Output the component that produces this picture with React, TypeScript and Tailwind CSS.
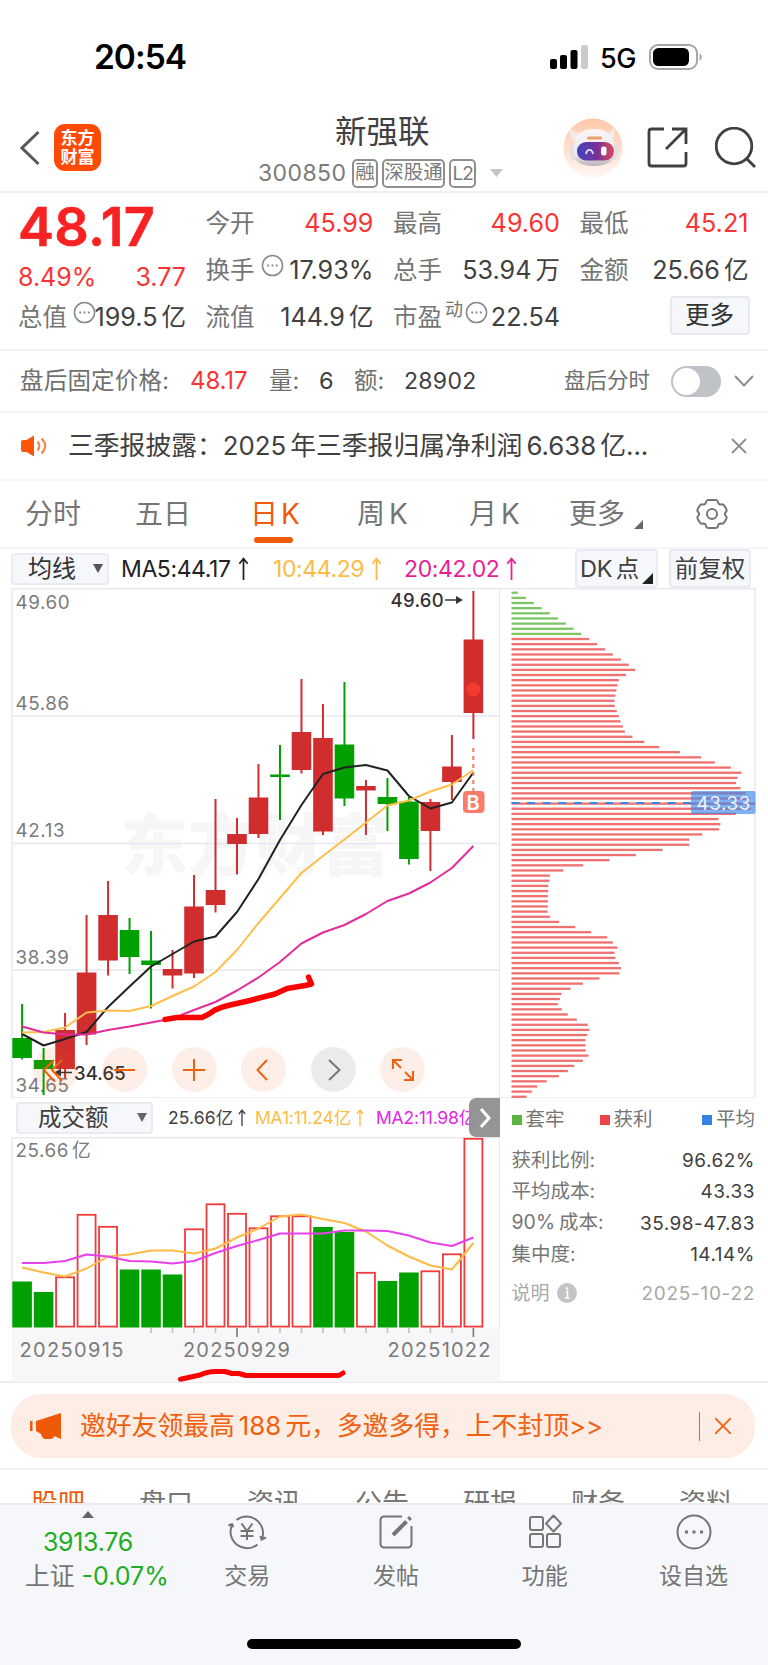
import type { ReactNode } from 'react';

const RED = '#d02d2f';
const GREEN = '#00a000';

// [high, low, bodyTop, bodyBottom, up]
const CANDLES: [number, number, number, number, boolean][] = [
    [1004, 1059.5, 1038, 1058, false],
    [1048, 1095, 1060, 1069, false],
    [1013, 1078, 1030, 1069, true],
    [915, 1045, 972.5, 1034.5, true],
    [881, 975.5, 915, 960.5, true],
    [918, 974, 930, 957, false],
    [931, 1008.5, 960.5, 965, false],
    [950, 988.5, 969, 975.5, true],
    [875, 978, 906.5, 973.5, true],
    [799, 912.5, 890, 905, true],
    [818, 874.5, 834, 844, true],
    [764, 838, 797.5, 834, true],
    [745, 820, 774.5, 777, false],
    [679, 773.5, 732, 770, true],
    [704, 835, 738, 831.5, true],
    [682, 806, 744.5, 798.5, false],
    [780, 835, 786, 790.5, true],
    [778, 831, 797, 804, false],
    [797, 864.5, 801.5, 859, false],
    [799, 871, 802, 831, true],
    [735, 800, 766.5, 782, true],
    [591, 739, 639.5, 713, true],
];

const MA5 = [1034, 1045.5, 1039, 1032, 1007, 986.5, 966.5, 954, 941.5, 936.5, 912, 879, 840, 805, 774, 767.5, 765, 770.5, 796, 808.5, 802.5, 772.5];
const MA10 = [1032.5, 1032, 1027.5, 1012.5, 1010.5, 1011, 1006, 996, 986.5, 972, 950, 923, 898, 873, 856, 839.5, 822.5, 805.5, 800.5, 791.5, 784.5, 770];
const MA20 = [1026.5, 1032.5, 1034.5, 1034.5, 1030, 1026.5, 1022.5, 1018.5, 1010, 1002, 990.5, 977.5, 962, 943.5, 932.5, 925, 914, 901, 893.5, 882.5, 868, 846];

// [top, up]
const VOLUMES: [number, boolean][] = [
    [1281.5, false], [1292, false], [1276.5, true], [1214, true], [1226, true], [1269.5, false],
    [1269.5, false], [1274.5, false], [1228.5, true], [1203.5, true], [1213, true], [1227.5, true],
    [1215.5, true], [1215.5, true], [1227, false], [1232, false], [1272, true], [1281, false],
    [1272.5, false], [1270.5, true], [1253.5, true], [1138, true],
];
const VOL_MA1 = [1267.5, 1272.5, 1276.5, 1268.5, 1256.5, 1254.5, 1250.5, 1250.5, 1253.5, 1248.5, 1237.5, 1228.5, 1216.5, 1214.5, 1219, 1223, 1231.5, 1245.5, 1256.5, 1265.5, 1269.5, 1243];
const VOL_MA2 = [1263, 1263, 1261, 1254.5, 1256.5, 1261, 1261.5, 1263.5, 1261, 1253, 1246, 1240, 1233.5, 1233.5, 1233.5, 1230.5, 1230.5, 1231, 1235.5, 1242.5, 1246, 1237.5];

const CHIPS = [
    19, 43, 67, 91, 115, 139, 163, 186, 209, 233, 257, 281, 304, 328, 352, 371, 343, 322, 318, 315, 312, 309, 310, 316, 322,
    327, 334, 340, 363, 398, 443, 505, 569, 610, 658, 690, 678, 674, 687, 703, 716, 731, 718, 673, 621, 627, 623, 572, 533, 533,
    453, 373, 294, 215, 156, 115, 114, 110, 110, 109, 109, 109, 108, 116, 143, 191, 239, 287, 304, 318, 309, 312, 322, 329, 324,
    264, 214, 177, 150, 145, 139, 151, 169, 196, 229, 234, 228, 222, 222, 223, 231, 214, 188, 169, 142, 105, 77, 61, 45,
];

const cx = (i: number) => 22.1 + i * 21.49;
const toPoints = (ys: number[]) => ys.map((y, i) => `${cx(i)},${y}`).join(' ');

const Dots = ({ className = '' }: { className?: string }) => (
    <svg viewBox="0 0 24 24" className={`size-[23px] shrink-0 ${className}`} fill="none" stroke="#8a8a8a">
        <circle cx="12" cy="12" r="10.5" strokeWidth="1.6" />
        <path d="M6.5 12h2M11 12h2M15.5 12h2" strokeWidth="2" />
    </svg>
);

const StatusBar = () => (
    <div className="flex h-[100px] items-start pl-[94px] pr-[65px] pt-[41px] text-black">
        <span className="h-8 text-[33.500px] font-semibold leading-8 tracking-[-1px]">20:54</span>
        <svg viewBox="0 0 38 24" className="ml-auto mt-1 h-6 w-[38px]">
            <rect x="0" y="14" width="7" height="10" rx="2" />
            <rect x="10" y="10" width="7" height="14" rx="2" />
            <rect x="20.5" y="5" width="7" height="19" rx="2" />
            <rect x="31" y="0" width="7" height="24" rx="2" fill="#ccc" />
        </svg>
        <span className="ml-3 w-[38px] pt-0.5 text-[27px] font-medium leading-8 tracking-[-0.5px]">5G</span>
        <svg viewBox="0 0 54 26" className="ml-[11px] mt-[3px] h-[26px] w-[54px]">
            <rect x="1" y="1" width="47" height="24" rx="8" fill="none" stroke="#a6a6a6" strokeWidth="2" />
            <rect x="4" y="4" width="36" height="18" rx="5.5" />
            <path d="M50.5 9.500c3 .8 3 6.200 0 7z" fill="#a6a6a6" />
        </svg>
    </div>
);

const Robot = () => (
    <svg viewBox="0 0 60 62" className="h-[62px] w-[60px]">
        <defs>
            <linearGradient id="halo" x1="0" y1="0" x2="0" y2="1">
                <stop offset="0" stopColor="#fec7aa" />
                <stop offset="1" stopColor="#fff7f2" />
            </linearGradient>
            <linearGradient id="visor" x1="0" y1="0" x2="1" y2="0">
                <stop offset="0" stopColor="#3f43c0" />
                <stop offset=".55" stopColor="#7a3096" />
                <stop offset="1" stopColor="#e04a5c" />
            </linearGradient>
            <linearGradient id="shell" x1="0" y1="0" x2="0" y2="1">
                <stop offset="0" stopColor="#fbf7f7" />
                <stop offset=".7" stopColor="#ebe7ea" />
                <stop offset="1" stopColor="#b9b2b6" />
            </linearGradient>
        </defs>
        <circle cx="30" cy="30" r="29.500" fill="url(#halo)" />
        <path d="M8 9c-1.500 6 0 11 4 14l6-7c-5 0-9-3-10-7zM51 9c1.500 6 0 11-4 14l-6-7c5 0 9-3 10-7z" fill="#f1ebec" />
        <path d="M8 27c-3 5-2 12 2 15l4-1V27zM54 27c3 5 2 12-2 15l-4-1V27z" fill="#e4dee2" />
        <path d="M11 27C12 15 21 11 31 11s19 4 20 16l1 8c0 9-10 13-21 13S10 44 10 35z" fill="url(#shell)" />
        <rect x="24" y="18.500" width="15" height="3" rx="1.500" fill="#eda06a" />
        <rect x="14" y="24" width="37" height="18.500" rx="9" fill="url(#visor)" />
        <path d="M23 36c1-5.500 6-5.500 7 0" fill="none" stroke="#dfe6ff" strokeWidth="1.800" />
        <rect x="38" y="28.500" width="5.500" height="9" rx="2.500" fill="#fff" />
    </svg>
);

const Header = () => (
    <header className="flex h-[93px] items-start border-b-2 border-[#f0f0f0] text-[#404040]">
        <svg viewBox="0 0 20 34" className="ml-5 mt-[31px] h-[34px] w-5" fill="none" stroke="#5a5a5a" strokeWidth="3">
            <path d="M18.500 1L2 17l16.500 16" />
        </svg>
        <div className="ml-3.5 mt-6 flex h-[47px] w-[47px] flex-col items-center justify-center rounded-[11px] bg-[#ff4a05] text-[17px] font-bold leading-[19px] text-white">
            <span>东方</span>
            <span>财富</span>
        </div>
        <div className="ml-[157px] mt-3 flex w-[245px] flex-col">
            <h1 className="ml-[77px] text-[31.500px] leading-[40px]">新强联</h1>
            <div className="mt-[6px] flex h-[30px] items-center text-[#7a7a7a]">
                <span className="w-[95px] text-[23px] leading-none tracking-[0.4px]">300850</span>
                <span className="flex h-[29px] w-[26px] items-center justify-center rounded-[5px] border-2 border-[#8f8f8f] text-[19.500px] leading-none">融</span>
                <span className="ml-1 flex h-[29px] w-[64px] items-center justify-center rounded-[5px] border-2 border-[#8f8f8f] text-[19.500px] leading-none">深股通</span>
                <span className="ml-1 flex h-[29px] w-[27px] items-center justify-center rounded-[5px] border-2 border-[#8f8f8f] text-[19px] leading-none tracking-[-1px]">L2</span>
                <svg viewBox="0 0 13 8" className="ml-3.5 h-2 w-[13px] shrink-0"><path d="M0 0h13L6.500 8z" fill="#c4c4c4" /></svg>
            </div>
        </div>
        <div className="ml-[60px] mt-[18px]"><Robot /></div>
        <svg viewBox="0 0 41 41" className="ml-[24px] mt-[27px] size-[41px]" fill="none" stroke="#404040" strokeWidth="2.800">
            <path d="M17 2H4.500a2.500 2.500 0 00-2.500 2.500v32A2.500 2.500 0 004.500 39h32a2.500 2.500 0 002.500-2.500V25M25 2h14v15M38.500 2.500L19 22" />
        </svg>
        <svg viewBox="0 0 42 42" className="ml-[27px] mt-[27px] size-[42px]" fill="none" stroke="#404040" strokeWidth="2.800">
            <circle cx="19" cy="19" r="17.800" />
            <path d="M31.500 31.500l8.500 8.500" />
        </svg>
    </header>
);

// number with the CJK unit set slightly apart
const Num = ({ value, unit }: { value: string; unit?: string }) => (
    <>{value}{unit && <span className="ml-[4px] text-[24.500px]">{unit}</span>}</>
);

const Stat = ({ label, value, unit, red, extra }: { label: string; value: string; unit?: string; red?: boolean; extra?: ReactNode }) => (
    <div className="flex h-[47px] items-center whitespace-nowrap text-[24.500px] leading-none">
        <span className="text-[#757575]">{label}</span>
        {extra}
        <span className={`ml-auto text-[25.200px] ${red ? 'text-[#fb3333]' : 'text-[#404040]'}`}><Num value={value} unit={unit} /></span>
    </div>
);

const Quote = () => (
    <section className="flex h-[158px] gap-[19.500px] border-b-2 border-[#f2f2f2] pl-[18px] pt-[7px]">
        <div className="w-[168px]">
            <div className="mt-[2px] h-[47px] text-[54px] font-semibold leading-[50px] tracking-[0.3px] text-[#f92222] [-webkit-text-stroke:0.6px_#f92222]">48.17</div>
            <div className="mt-[2px] flex h-[52px] items-center justify-between text-[25px] leading-none text-[#fb3333]">
                <span>8.49%</span>
                <span>3.77</span>
            </div>
            <div className="-mt-[9px]">
                <Stat label="总值" value="199.5" unit="亿" extra={<Dots className="-mr-3 ml-1.5 -translate-y-[5px]" />} />
            </div>
        </div>
        <div className="w-[168px]">
            <Stat label="今开" value="45.99" red />
            <Stat label="换手" value="17.93%" extra={<Dots className="ml-1.5 -translate-y-[5px]" />} />
            <Stat label="流值" value="144.9" unit="亿" />
        </div>
        <div className="w-[167px]">
            <Stat label="最高" value="49.60" red />
            <Stat label="总手" value="53.94" unit="万" />
            <Stat
                label="市盈"
                value="22.54"
                extra={<><span className="ml-[3px] -translate-y-[8px] text-[18px] text-[#757575]">动</span><Dots className="-mr-2 ml-[2px] -translate-y-[5px]" /></>}
            />
        </div>
        <div className="w-[169px]">
            <Stat label="最低" value="45.21" red />
            <Stat label="金额" value="25.66" unit="亿" />
            <button className="-mr-px ml-auto mt-[2px] block h-[39px] w-[80px] rounded-[4px] border-2 border-[#e6e9ef] bg-[#f6f7fa] text-[24.500px] leading-none text-[#333]">更多</button>
        </div>
    </section>
);

const AfterHours = () => (
    <section className="flex h-[62px] items-center whitespace-nowrap border-b-2 border-[#f5f5f5] pl-5 text-[23.500px] leading-none text-[#707070]">
        <span className="w-[170px] tracking-[0.2px]">盘后固定价格:</span>
        <span className="w-[79px] text-[24px] tracking-[-0.1px] text-[#fb3333]">48.17</span>
        <span className="w-[50px]">量:</span>
        <span className="w-[35px] text-[#404040]">6</span>
        <span className="w-[50px]">额:</span>
        <span className="text-[23px] tracking-[0.3px] text-[#404040]">28902</span>
        <span className="ml-auto text-[21.500px]">盘后分时</span>
        <span className="ml-[21px] flex h-[31px] w-[50px] items-center rounded-full bg-[#bfc3c8] p-[2px]">
            <span className="size-[27px] rounded-full bg-white" />
        </span>
        <svg viewBox="0 0 20 12" className="ml-[13px] mr-[14px] h-3 w-5" fill="none" stroke="#8d8d94" strokeWidth="2"><path d="M1 1l9 9.500L19 1" /></svg>
    </section>
);

const Notice = () => (
    <section className="flex h-[68px] items-center border-b-2 border-[#f5f5f5] pl-[21px] pr-[21px] text-[25.800px] leading-none text-[#404040]">
        <svg viewBox="0 0 26 22" className="h-[22px] w-[26px]">
            <path d="M0 7q0-2 2-2h3.500L13 .5V21.500L5.500 17H2q-2 0-2-2z" fill="#fb5607" />
            <path d="M16.500 6.500c2.500 3 2.500 6 0 9M20.500 3.500c5 5 5 10 0 15" fill="none" stroke="#fb7f45" strokeWidth="2" />
        </svg>
        <p className="ml-[21px] whitespace-nowrap">
            三季报披露：2025<span className="mx-[4px]">年三季报归属净利润</span>6.638<span className="ml-[4px]">亿...</span>
        </p>
        <svg viewBox="0 0 16 16" className="ml-auto size-4" stroke="#8d8d8d" strokeWidth="1.800"><path d="M1 1l14 14M15 1L1 15" /></svg>
    </section>
);

const PeriodTabs = () => (
    <nav className="flex h-[68px] items-center border-b-2 border-[#f5f6f8] pl-[25px] text-[28px] leading-none text-[#757575]">
        <span className="w-[110px]">分时</span>
        <span className="w-[115px]">五日</span>
        <span className="relative w-[107px] text-[#f25a0b]">
            日<span className="ml-[3px]">K</span>
            <span className="absolute left-[4px] top-[37px] h-[6px] w-[39px] rounded-[3px] bg-[#ee5a08]" />
        </span>
        <span className="w-[112px]">周<span className="ml-1">K</span></span>
        <span className="w-[100px]">月<span className="ml-1">K</span></span>
        <span>更多</span>
        <svg viewBox="0 0 9 9" className="ml-[9px] mt-[20px] size-[9px]"><path d="M9 0v9H0z" fill="#666" /></svg>
        <svg viewBox="0 0 32 32" className="ml-[53px] size-8" fill="none" stroke="#757575" strokeWidth="2">
            <path d="M12 2h8q1.500 0 2 2l.5 1.500q.5 1 2 1l1.500-.2q1.500 0 2.200 1.200l2 3.500q.8 1.500 0 2.700l-1 1.300q-.6 1 0 2l1 1.300q.8 1.200 0 2.700l-2 3.500q-.7 1.200-2.200 1.200l-1.500-.2q-1.500 0-2 1L22 28q-.5 2-2 2h-8q-1.500 0-2-2l-.5-1.500q-.5-1-2-1L6 25.700q-1.500 0-2.200-1.200l-2-3.500q-.8-1.500 0-2.700l1-1.300q.6-1 0-2l-1-1.300q-.8-1.200 0-2.700l2-3.500Q4.500 6.300 6 6.300l1.500.2q1.500 0 2-1L10 4q.5-2 2-2z" />
            <circle cx="16" cy="16" r="5" />
        </svg>
    </nav>
);

const Up = ({ small }: { small?: boolean }) => (
    <svg viewBox="0 0 10 22" className={small ? 'ml-[5px] inline h-[17px] w-[8px] align-[-2px]' : 'ml-[7px] inline h-[23px] w-[11px] align-[-3px]'} fill="none" stroke="currentColor" strokeWidth="1.700">
        <path d="M5 22V1.500M1 6.500l4-5 4 5" />
    </svg>
);

const MaRow = () => (
    <div className="flex h-[39px] items-center whitespace-nowrap pl-[11px] text-[23px] leading-none">
        <button className="flex h-[32px] w-[98px] items-center rounded-[4px] border-2 border-[#e9ebf2] bg-[#f6f7fa] pl-[15px] text-[24px] leading-none text-[#333]">
            均线
            <svg viewBox="0 0 10 9" className="ml-[17px] h-[9px] w-[10px]"><path d="M0 0h10L5 9z" fill="#555" /></svg>
        </button>
        <span className="ml-3 w-[152px] tracking-[-0.4px] text-[#222]">MA5:44.17<Up /></span>
        <span className="w-[131px] tracking-[-0.4px] text-[#fdbb45]">10:44.29<Up /></span>
        <span className="tracking-[-0.4px] text-[#ea1d95]">20:42.02<Up /></span>
        <button className="relative ml-auto h-[39px] w-[83px] rounded-[4px] border-2 border-[#e9ebf2] bg-[#f6f7fa] pr-[14px] text-[23.500px] leading-none text-[#404040]">
            DK<span className="ml-[3px]">点</span>
            <svg viewBox="0 0 11 11" className="absolute bottom-[2px] right-[3px] size-[11px]"><path d="M11 0v11H0z" fill="#222" /></svg>
        </button>
        <button className="ml-[11px] mr-[17px] h-[39px] w-[82px] rounded-[4px] border-2 border-[#e9ebf2] bg-[#f6f7fa] text-[23.500px] leading-none text-[#404040]">前复权</button>
    </div>
);

const Kline = () => (
    <svg viewBox="0 588 500 510" className="block h-[510px] w-[500px]">
        <text x="121" y="870" fontSize="67" fontWeight="900" fill="#f6f6f6" textLength="268">东方财富</text>
        <path d="M12 716h488M12 843.500h488M12 970h488" stroke="#e6e8f0" strokeWidth="1.500" />
        <path d="M500 588.700H12V1098h488M499.500 588v510" fill="none" stroke="#e8eaf0" strokeWidth="1.500" />
        <g fontSize="18.800" fill="#7b7b7b" letterSpacing="0.600">
            <text x="15.500" y="609">49.60</text>
            <text x="15.500" y="709.500">45.86</text>
            <text x="15.500" y="837">42.13</text>
            <text x="15.500" y="964">38.39</text>
            <text x="15.500" y="1091.500">34.65</text>
        </g>
        {CANDLES.map(([high, low, top, bottom, up], i) => (
            <g key={i} fill={up ? RED : GREEN}>
                <rect x={cx(i) - 1} y={high} width="2" height={low - high} />
                <rect x={cx(i) - 9.8} y={top} width="19.600" height={bottom - top} />
            </g>
        ))}
        <circle cx="473.300" cy="689.500" r="7" fill="#f23b2a" />
        <g fill="none" strokeWidth="2" strokeLinejoin="round">
            <polyline points={toPoints(MA5)} stroke="#222" />
            <polyline points={toPoints(MA10)} stroke="#fdbf4b" />
            <polyline points={toPoints(MA20)} stroke="#e32c9b" />
        </g>
        <path d="M473.300 748v43" stroke="#fb7766" strokeWidth="2" strokeDasharray="4 4" />
        <rect x="463" y="791" width="21.500" height="22" rx="4" fill="#fb7c6b" />
        <text x="466.500" y="809.500" fontSize="20" fontWeight="600" fill="#fff">B</text>
        <g fontSize="18.500" fontWeight="500" fill="#333">
            <text x="390.500" y="606.800" letterSpacing="0.300">49.60</text>
            <text x="74" y="1079.500" letterSpacing="0.100">34.65</text>
        </g>
        <path d="M445 600h16M56 1072.500h16" stroke="#333" strokeWidth="1.600" />
        <path d="M456 596l7 4-7 4zM61 1068.500l-7 4 7 4z" fill="#333" />
        <path
            d="M165 1019.500L177 1017.500L202 1017.500Q208 1015 215 1010Q222 1006.500 230 1005L250 1000.500L275 994L287 988.500L305 985.500L311.500 984L308.500 977"
            fill="none" stroke="#ff0000" strokeWidth="5.500" strokeLinecap="round" strokeLinejoin="round"
        />
    </svg>
);

const ChipChart = () => (
    <svg viewBox="500 588 268 510" className="block h-[510px] w-[268px]">
        <path d="M500 588.700h255V1098H500" fill="none" stroke="#e8eaf0" strokeWidth="1.500" />
        {CHIPS.map((w, i) => (
            <rect key={i} x="511.500" y={591.6 + i * 5.143} width={w / 3} height="2.300" fill={i < 9 ? '#7cc664' : '#f07070'} />
        ))}
        <path d="M511.500 803h180" stroke="#3b86e8" strokeWidth="2.200" strokeDasharray="8 7.600" />
        <rect x="691" y="791" width="64.500" height="23" rx="2" fill="#3b86e8" fillOpacity=".65" />
        <text x="696.500" y="810" fontSize="18.800" fill="#eef3fd" letterSpacing="0.600">43.33</text>
    </svg>
);

const Tool = ({ children, gray }: { children: ReactNode; gray?: boolean }) => (
    <span className={`flex size-[45px] items-center justify-center rounded-full ${gray ? 'bg-black/8 text-[#777]' : 'bg-[#f0600f]/10 text-[#f0600f]'}`}>
        <svg viewBox="0 0 24 24" className="size-6" fill="none" stroke="currentColor" strokeWidth="2">{children}</svg>
    </span>
);

const Tools = () => (
    <div className="absolute bottom-[6px] left-[32.500px] flex gap-[24.600px]">
        <Tool><path d="M11 2L1 12l10 11M19 2L9 12l10 11" /></Tool>
        <Tool><path d="M1 12h21" /></Tool>
        <Tool><path d="M1 12h22M12 1v22" /></Tool>
        <Tool><path d="M15 2L5.500 12 15 22" /></Tool>
        <Tool gray><path d="M8 2l10.500 10L8 22" /></Tool>
        <Tool><path d="M2 11V2h9M2 2l8 8M22 13v9h-9M22 22l-8-8" /></Tool>
    </div>
);

const VolumePanel = () => (
    <div className="w-[500px]">
        <div className="relative flex h-[39px] items-center overflow-hidden whitespace-nowrap pl-4 text-[17.500px] leading-none tracking-[-0.2px]">
            <button className="flex h-[32px] w-[137px] items-center rounded-[4px] border-2 border-[#e9ebf2] bg-[#f6f7fa] pl-[20px] text-[23.500px] leading-none tracking-normal text-[#404040]">
                成交额
                <svg viewBox="0 0 10 9" className="ml-[28px] h-[9px] w-[10px]"><path d="M0 0h10L5 9z" fill="#666" /></svg>
            </button>
            <span className="ml-[15px] w-[87px] tracking-[0.1px] text-[#404040]">25.66亿<Up small /></span>
            <span className="w-[121px] text-[#fdbb45]">MA1:11.24亿<Up small /></span>
            <span className="text-[#e326ea]">MA2:11.98亿</span>
            <span className="absolute right-0 top-0 flex h-[39px] w-[31px] items-center justify-center rounded-l-[7px] bg-[#8f8f8f]/95">
                <svg viewBox="0 0 12 20" className="h-5 w-3" fill="none" stroke="#fff" strokeWidth="3"><path d="M2 1l8 9-8 9" /></svg>
            </span>
        </div>
        <svg viewBox="0 1137 500 245" className="block h-[245px] w-[500px]">
            <rect x="12" y="1328" width="488" height="54" fill="#f7f7fa" />
            <path d="M12 1328V1137.700h488M499.500 1137v191" fill="none" stroke="#e8eaf0" strokeWidth="1.500" />
            <text x="15.500" y="1156.500" fontSize="18.800" fill="#7b7b7b" letterSpacing="0.600">25.66<tspan dx="3">亿</tspan></text>
            {VOLUMES.map(([top, up], i) => up
                ? <rect key={i} x={cx(i) - 9} y={top + 0.8} width="18" height={1325.800 - top} fill="#fff" stroke="#f13a3c" strokeWidth="1.800" />
                : <rect key={i} x={cx(i) - 9.8} y={top} width="19.600" height={1327.500 - top} fill={GREEN} />)}
            <g fill="none" strokeWidth="2" strokeLinejoin="round">
                <polyline points={toPoints(VOL_MA1)} stroke="#fdbb45" />
                <polyline points={toPoints(VOL_MA2)} stroke="#e840ea" />
            </g>
            {VOLUMES.map((_, i) => i > 5 && (
                <path key={i} d={`M${cx(i)} 1328v${i === 10 || i === 21 ? 9 : 5}`} stroke={i === 10 || i === 21 ? '#777' : '#c0c0c4'} strokeWidth="1.600" />
            ))}
            <g fontSize="20" fill="#7b7b7b">
                <text x="19.500" y="1357" textLength="104">20250915</text>
                <text x="183" y="1357" textLength="107">20250929</text>
                <text x="387.500" y="1357" textLength="103">20251022</text>
            </g>
            <path
                d="M180.500 1379.300L200 1375Q208 1371.500 215 1371.500H225L232 1373.500H239L246 1375.500H339L343 1373"
                fill="none" stroke="#ff0000" strokeWidth="5" strokeLinecap="round" strokeLinejoin="round"
            />
        </svg>
    </div>
);

const Row = ({ label, value }: { label: ReactNode; value: string }) => (
    <div className="flex h-[31.300px] items-center justify-between text-[19.500px] leading-none text-[#757575]">
        <span>{label}</span>
        <span className="text-[19px] tracking-[0.5px] text-[#404040]">{value}</span>
    </div>
);

const ChipStats = () => (
    <div className="flex w-[268px] flex-col pl-[11.500px] pr-[13px]">
        <div className="flex h-[44px] items-center whitespace-nowrap text-[19.500px] leading-none text-[#757575]">
            <span className="flex w-[88px] items-center gap-[4px]"><i className="size-[10px] bg-[#5bb543]" />套牢</span>
            <span className="flex items-center gap-[4px]"><i className="size-[10px] bg-[#ea4647]" />获利</span>
            <span className="ml-auto flex items-center gap-[4px]"><i className="size-[10px] bg-[#3584e4]" />平均</span>
        </div>
        <div className="mt-[3px]">
            <Row label="获利比例:" value="96.62%" />
            <Row label="平均成本:" value="43.33" />
            <Row label={<>90%<span className="ml-[4px]">成本:</span></>} value="35.98-47.83" />
            <Row label="集中度:" value="14.14%" />
        </div>
        <div className="mt-[8px] flex h-[30px] items-center text-[19px] leading-none text-[#a8a8a8]">
            <span>说明</span>
            <svg viewBox="0 0 20 20" className="ml-[7px] size-5">
                <circle cx="10" cy="10" r="10" fill="#c4c4c4" />
                <path d="M9 8.500h1.500V15M8 15h4.500" fill="none" stroke="#fff" strokeWidth="1.600" />
                <circle cx="10" cy="5.500" r="1.300" fill="#fff" />
            </svg>
            <span className="ml-auto tracking-[0.7px]">2025-10-22</span>
        </div>
    </div>
);

const Banner = () => (
    <div className="ml-[11px] mt-[11px] flex h-[64px] w-[744px] items-center rounded-[30px] bg-[#feede4] pl-[19px] text-[25.800px] leading-none text-[#f0600f]">
        <svg viewBox="0 0 31 26" className="h-[26px] w-[31px]" fill="#ee5a08">
            <path d="M0 8h2.500v10H0zM6 8L31 0v26l-3.500-1.500-3-1.200q-1.500 3-5 2.700H15q-3-.5-4-5L6 18z" />
        </svg>
        <p className="ml-[19px] whitespace-nowrap">邀好友领最高<span className="mx-[4px]">188</span>元，多邀多得，上不封顶&gt;&gt;</p>
        <span className="ml-auto h-[29px] w-[1.500px] bg-[#f0600f]" />
        <svg viewBox="0 0 16 16" className="ml-[15px] mr-6 size-4" stroke="#f0600f" strokeWidth="1.800"><path d="M0 0l16 16M16 0L0 16" /></svg>
    </div>
);

const TABS = ['股吧', '盘口', '资讯', '公告', '研报', '财务', '资料'];

const SectionTabs = () => (
    <div className="mt-[10px] flex h-[35px] justify-between overflow-hidden border-t-2 border-[#f0f1f5] pl-[31px] pr-[35px] pt-[18px] text-[27px] leading-[32px] text-[#757575]">
        {TABS.map((tab, i) => <span key={tab} className={i === 0 ? 'text-[#f25a0b]' : ''}>{tab}</span>)}
    </div>
);

const Action = ({ label, children }: { label: string; children: ReactNode }) => (
    <div className="flex w-[149px] flex-col items-center pt-[9px]">
        <svg viewBox="0 0 40 36" className="h-9 w-10" fill="none" stroke="#757575" strokeWidth="2">{children}</svg>
        <span className="mt-[13px] text-[23px] leading-[26px]">{label}</span>
    </div>
);

const BottomBar = () => (
    <footer className="relative flex h-[162px] border-t-2 border-[#ebecef] bg-[#f6f7fa] pl-[25px] text-[#757575]">
        <div className="flex w-[148px] flex-col items-center pt-[6px]">
            <svg viewBox="0 0 12 7" className="ml-[-22px] h-[7px] w-3"><path d="M6 0l6 7H0z" fill="#666" /></svg>
            <span className="-ml-[22px] mt-[8px] text-[25px] leading-[32px] tracking-[-0.3px] text-[#21ad21]">3913.76</span>
            <span className="-ml-[4px] mt-[2px] whitespace-nowrap text-[24.800px] leading-[32px]">上证<span className="ml-[7px] text-[25px] text-[#21ad21]">-0.07%</span></span>
        </div>
        <Action label="交易">
            <path d="M9.500 6A16.500 16.500 0 0134.500 26M30.500 30.500A16.500 16.500 0 015 11M1.500 11.500L5 10l1.500 3M39 23.500l-4.500 2-1-3.500" />
            <path d="M14.500 9.500l5.500 7.500 5.500-7.500M13.500 17h13M13.500 22h13M20 17v9" />
        </Action>
        <Action label="发帖">
            <path d="M26 2.500H8A3.500 3.500 0 004.500 6v24A3.500 3.500 0 008 33.500h24a3.500 3.500 0 003.500-3.500V12" />
            <path d="M32.500 5.500L34.500 3.500M30.500 7.500L17 21" strokeWidth="4" />
        </Action>
        <Action label="功能">
            <rect x="5" y="3" width="13" height="13" rx="2" />
            <path d="M28.500 1.500L36 9.500l-7.500 8L21 9.500z" strokeLinejoin="round" />
            <rect x="5" y="20" width="13" height="13" rx="2" />
            <rect x="22" y="20" width="13" height="13" rx="2" />
        </Action>
        <Action label="设自选">
            <circle cx="20" cy="18" r="16.500" />
            <path d="M11 18h3M18.500 18h3M26 18h3" strokeWidth="3" />
        </Action>
        <span className="absolute bottom-4 left-[247px] h-[10px] w-[274px] rounded-full bg-black" />
    </footer>
);

const App = () => (
    <main className="h-[1665px] w-[768px] overflow-hidden bg-white font-['Inter','Noto_Sans_CJK_SC',sans-serif]">
        <StatusBar />
        <Header />
        <Quote />
        <AfterHours />
        <Notice />
        <PeriodTabs />
        <MaRow />
        <div className="relative flex h-[510px]">
            <Kline />
            <ChipChart />
            <Tools />
        </div>
        <div className="flex h-[285px] border-b-2 border-[#ebedf3]">
            <VolumePanel />
            <ChipStats />
        </div>
        <Banner />
        <SectionTabs />
        <BottomBar />
    </main>
);

export default App;
